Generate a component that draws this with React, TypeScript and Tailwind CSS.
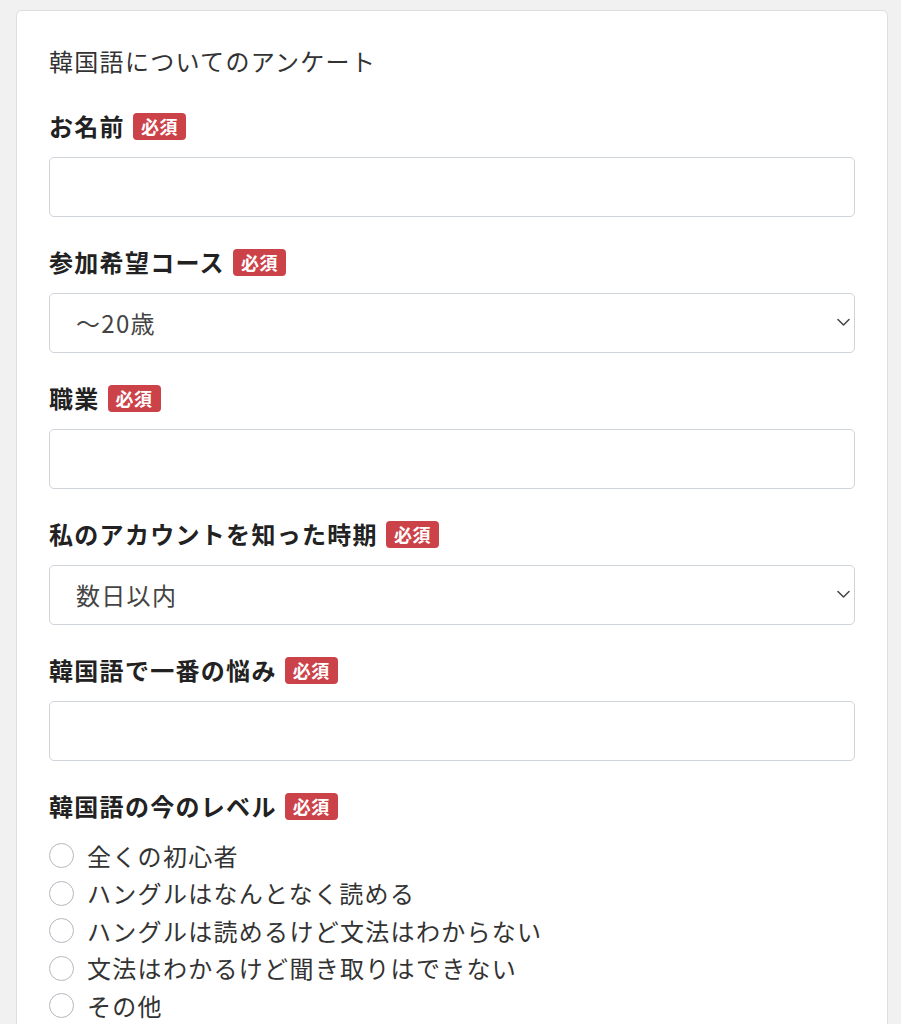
import React from "react";

const font = { fontFamily: '"Noto Sans CJK JP", "Noto Sans", sans-serif' };

function Badge() {
  return (
    <span className="inline-flex h-[27px] items-center rounded-[4px] bg-[#cc4249] px-[8px] text-[18px] font-bold leading-none tracking-[0.5px] text-white">
      必須
    </span>
  );
}

function Label({ text }: { text: string }) {
  return (
    <div className="flex h-[28px] items-center gap-[8px]">
      <span className="text-[24px] font-bold leading-[28px] tracking-[1.3px] text-[#222]">{text}</span>
      <Badge />
    </div>
  );
}

function TextInput() {
  return (
    <input
      type="text"
      className="mt-[17px] block h-[60px] w-full rounded-[5px] border border-[#ced4da] bg-white px-[26px] text-[24px] outline-none"
    />
  );
}

function Select({ value }: { value: string }) {
  return (
    <div className="relative mt-[17px] h-[60px] w-full">
      <div className="flex h-[60px] w-full items-center rounded-[5px] border border-[#ced4da] bg-white pl-[26px] text-[24px] tracking-[1.3px] text-[#444]">
        {value}
      </div>
      <svg
        className="absolute right-[5px] top-[25px]"
        width="13"
        height="9"
        viewBox="0 0 13 9"
        fill="none"
      >
        <path d="M1 1.5 L6.5 7 L12 1.5" stroke="#444" strokeWidth="1.5" strokeLinecap="round" strokeLinejoin="round" />
      </svg>
    </div>
  );
}

const options = [
  "全くの初心者",
  "ハングルはなんとなく読める",
  "ハングルは読めるけど文法はわからない",
  "文法はわかるけど聞き取りはできない",
  "その他",
];

export default function App() {
  return (
    <div className="min-h-screen bg-[#f1f1f1] pt-[10px]" style={font}>
      <div className="ml-[16px] w-[872px] rounded-[6px] border border-[#dedede] bg-white px-[32px] pb-[40px] pt-[36px]">
        <div className="text-[24px] leading-[28px] tracking-[1.3px] text-[#333]">韓国語についてのアンケート</div>

        <div className="mt-[37px]">
          <Label text="お名前" />
          <TextInput />
        </div>

        <div className="mt-[31px]">
          <Label text="参加希望コース" />
          <Select value="〜20歳" />
        </div>

        <div className="mt-[31px]">
          <Label text="職業" />
          <TextInput />
        </div>

        <div className="mt-[31px]">
          <Label text="私のアカウントを知った時期" />
          <Select value="数日以内" />
        </div>

        <div className="mt-[31px]">
          <Label text="韓国語で一番の悩み" />
          <TextInput />
        </div>

        <div className="mt-[31px]">
          <Label text="韓国語の今のレベル" />
          <div className="mt-[17px] flex flex-col">
            {options.map((o) => (
              <div key={o} className="flex h-[37.5px] items-center gap-[13px]">
                <span className="block h-[25px] w-[25px] shrink-0 rounded-full border-[1.5px] border-[#b4b9be] bg-white" />
                <span className="text-[24px] leading-none tracking-[1.3px] text-[#333]">{o}</span>
              </div>
            ))}
          </div>
        </div>
      </div>
    </div>
  );
}
